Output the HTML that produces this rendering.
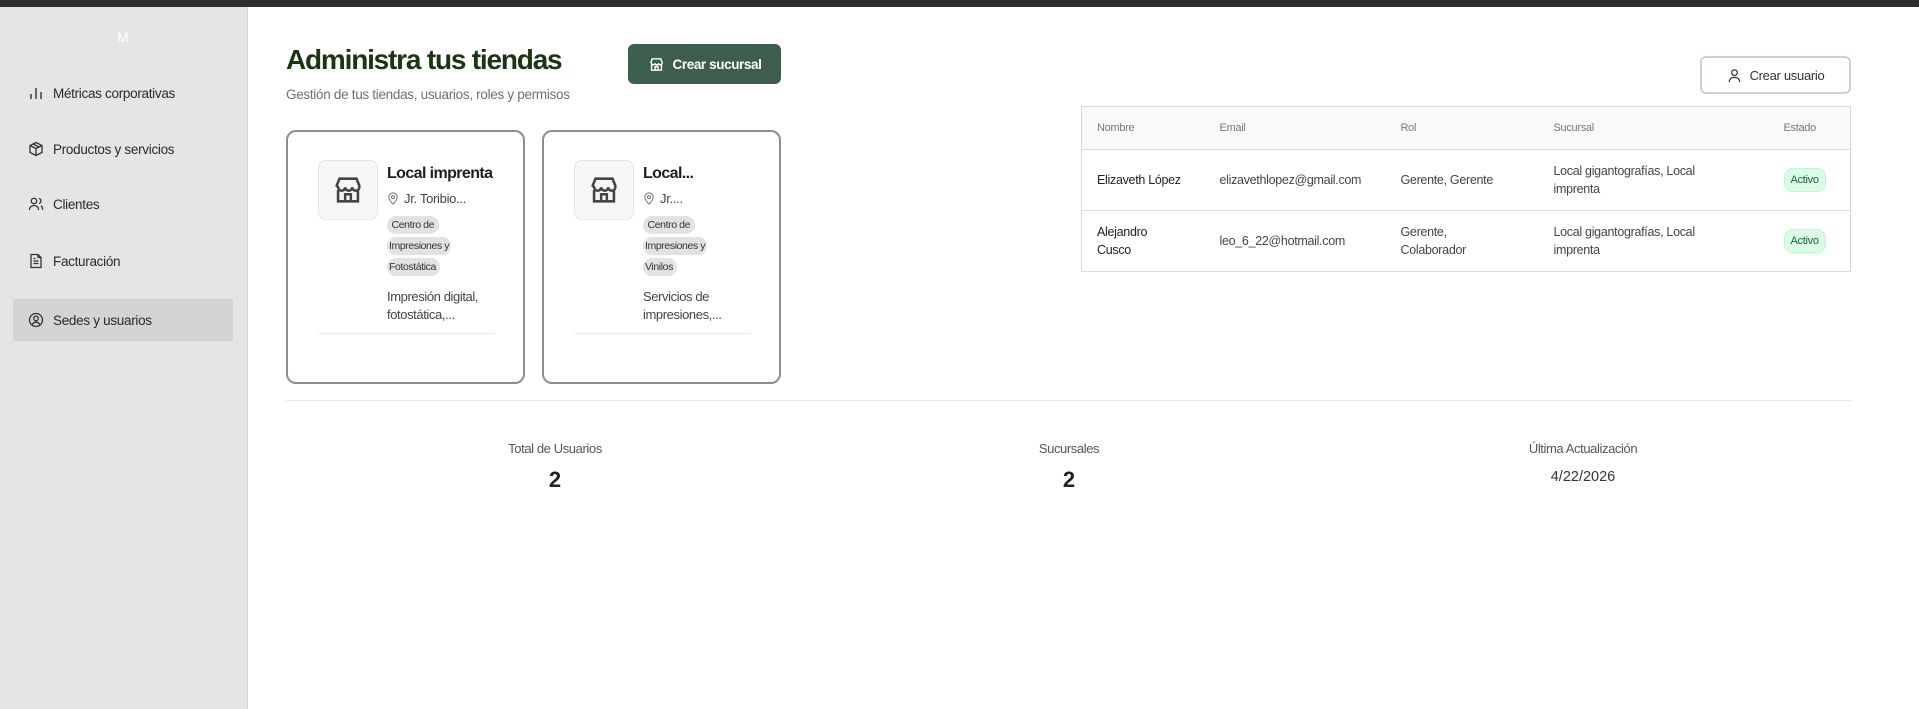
<!DOCTYPE html>
<html><head><meta charset="utf-8"><style>
*{box-sizing:border-box;margin:0;padding:0}
body{width:1919px;height:709px;overflow:hidden;background:#fff;font-family:"Liberation Sans",sans-serif;position:relative;color:#222}
.top{position:absolute;left:0;top:0;width:1919px;height:7px;background:#2e2e2e}
.side{position:absolute;left:0;top:7px;width:248px;height:702px;background:#e5e5e7;border-right:1px solid #d6d6d8}
.logo{position:absolute;left:117px;top:22px;color:#fff;font-size:14px}
.nav{position:absolute;left:13px;width:220px;height:42px;display:flex;align-items:center;padding-left:15px;font-size:13.5px;color:#2a2a2a;letter-spacing:-0.3px}
.nav svg{margin-right:9px}
.nav.act{background:#d4d4d6;border-radius:2px}
.abs{position:absolute}
h1{position:absolute;left:286px;top:44px;font-size:28px;color:#1b3412;letter-spacing:-1.2px;font-weight:bold}
.sub{left:286px;top:87px;font-size:13.5px;color:#707070;letter-spacing:-0.3px}
.btn1{left:628px;top:44px;width:153px;height:40px;background:#3d5e4a;border-radius:6px;color:#fff;font-size:13.5px;font-weight:bold;display:flex;align-items:center;justify-content:center;gap:8px;letter-spacing:-0.4px}
.card{position:absolute;top:130px;width:239px;height:254px;border:2px solid #8c8c98;border-radius:10px}
.ib{position:absolute;left:30px;top:28px;width:60px;height:60px;background:#f7f7f7;border:1px solid #e4e4e4;border-radius:8px;display:flex;align-items:center;justify-content:center}
.ct{position:absolute;left:99px;top:33px;font-size:16px;font-weight:bold;color:#1e1e1e;letter-spacing:-0.6px}
.loc{position:absolute;left:99px;top:59px;font-size:13px;color:#444;display:flex;align-items:center;gap:5px;letter-spacing:-0.3px}
.tag{position:absolute;left:99px;top:83px;font-size:10.5px;color:#333;line-height:21px;width:100px;letter-spacing:-0.4px}
.tag span{background:#e2e2e2;border-radius:10px;padding:3px 2px}
.desc{position:absolute;left:99px;top:156px;font-size:13px;color:#444;line-height:18px;letter-spacing:-0.4px}
.hr{position:absolute;left:30px;top:201px;width:177px;height:1px;background:#ececec}
.btn2{left:1700px;top:56px;width:151px;height:38px;border:2px solid #c8d0dc;border-radius:6px;font-size:13px;color:#333;display:flex;align-items:center;justify-content:center;gap:8px;letter-spacing:-0.3px}
table{position:absolute;left:1081px;top:106px;width:770px;border-collapse:collapse;border:1px solid #d8d8dc;font-size:12.5px;letter-spacing:-0.3px;table-layout:fixed}
th{height:43px;background:#f8f9fa;font-weight:normal;color:#777;font-size:11px;text-align:left;border-bottom:1px solid #d8d8dc}
td{height:61px;border-bottom:1px solid #dcdcdc;color:#444;line-height:18px}
td:first-child{color:#222}
.b{display:inline-block;background:#dcfce7;border:1px solid #bbf7d0;color:#166534;font-size:11px;padding:2px 6px;border-radius:9px}
.line{left:286px;top:400px;width:1565px;height:1px;background:#e6e6e6}
.st{position:absolute;top:441px;width:522px;text-align:center}
.st .l{font-size:13px;color:#555;letter-spacing:-0.4px}
.st .v{font-size:22px;font-weight:bold;color:#222;margin-top:11px}
.st .d{font-size:14.5px;color:#333;margin-top:13px}
</style></head><body>
<div class="top"></div>
<div class="side">
<div class="logo">M</div>
<div class="nav" style="top:65px"><svg width="16" height="16" viewBox="0 0 16 16" fill="none" stroke="#333" stroke-width="1.4"><path d="M3 14V9M8 14V3M13 14V7"/></svg>Métricas corporativas</div>
<div class="nav" style="top:121px"><svg width="16" height="16" viewBox="0 0 16 16" fill="none" stroke="#333" stroke-width="1.3"><path d="M8 1.5l6 3v7l-6 3-6-3v-7zM2 4.5l6 3 6-3M8 7.5v7M5 3l6 3"/></svg>Productos y servicios</div>
<div class="nav" style="top:176px"><svg width="16" height="16" viewBox="0 0 16 16" fill="none" stroke="#333" stroke-width="1.3"><circle cx="6" cy="5" r="2.7"/><path d="M1.5 14c0-3 2-4.5 4.5-4.5s4.5 1.5 4.5 4.5M11 2.5a2.6 2.6 0 010 5M13 9.8c1 .7 1.6 2 1.6 4"/></svg>Clientes</div>
<div class="nav" style="top:233px"><svg width="16" height="16" viewBox="0 0 16 16" fill="none" stroke="#333" stroke-width="1.3"><path d="M3 1.5h7l3 3v10H3zM10 1.5v3h3M5.5 8h5M5.5 10.5h5M5.5 5.5h2"/></svg>Facturación</div>
<div class="nav act" style="top:292px"><svg width="16" height="16" viewBox="0 0 16 16" fill="none" stroke="#333" stroke-width="1.3"><circle cx="8" cy="8" r="6.5"/><circle cx="8" cy="6.5" r="2.3"/><path d="M4 12.8c1-1.8 2.3-2.6 4-2.6s3 .8 4 2.6"/></svg>Sedes y usuarios</div>
</div>
<h1>Administra tus tiendas</h1>
<div class="abs sub">Gestión de tus tiendas, usuarios, roles y permisos</div>
<div class="abs btn1"><svg width="17" height="17" viewBox="0 0 24 24" fill="none" stroke="#fff" stroke-width="2"><path d="M4 9l2-5h12l2 5v1a2.5 2.5 0 01-5 0 2.5 2.5 0 01-5 0 2.5 2.5 0 01-5 0zM5 12v8h14v-8M10 20v-5h4v5"/></svg>Crear sucursal</div>

<div class="card" style="left:286px">
<div class="ib"><svg width="34" height="34" viewBox="0 0 24 24" fill="none" stroke="#444" stroke-width="1.8"><path d="M4 9l2-5h12l2 5v1a2.5 2.5 0 01-5 0 2.5 2.5 0 01-5 0 2.5 2.5 0 01-5 0zM5 12v8h14v-8M10 20v-5h4v5"/></svg></div>
<div class="ct">Local imprenta</div>
<div class="loc"><svg width="12" height="13" viewBox="0 0 12 14" fill="none" stroke="#777" stroke-width="1.1"><path d="M6 13s-4.5-4-4.5-7.5a4.5 4.5 0 019 0C10.5 9 6 13 6 13z"/><circle cx="6" cy="5.5" r="1.6"/></svg>Jr. Toribio...</div>
<div class="tag"><span>&nbsp;Centro de&nbsp;</span><br><span>Impresiones y</span><br><span>Fotostática&nbsp;</span></div>
<div class="desc">Impresión digital,<br>fotostática,...</div>
<div class="hr"></div>
</div>
<div class="card" style="left:542px">
<div class="ib"><svg width="34" height="34" viewBox="0 0 24 24" fill="none" stroke="#444" stroke-width="1.8"><path d="M4 9l2-5h12l2 5v1a2.5 2.5 0 01-5 0 2.5 2.5 0 01-5 0 2.5 2.5 0 01-5 0zM5 12v8h14v-8M10 20v-5h4v5"/></svg></div>
<div class="ct">Local...</div>
<div class="loc"><svg width="12" height="13" viewBox="0 0 12 14" fill="none" stroke="#777" stroke-width="1.1"><path d="M6 13s-4.5-4-4.5-7.5a4.5 4.5 0 019 0C10.5 9 6 13 6 13z"/><circle cx="6" cy="5.5" r="1.6"/></svg>Jr....</div>
<div class="tag"><span>&nbsp;Centro de&nbsp;</span><br><span>Impresiones y</span><br><span>Vinilos&nbsp;</span></div>
<div class="desc">Servicios de<br>impresiones,...</div>
<div class="hr"></div>
</div>

<div class="abs btn2"><svg width="15" height="15" viewBox="0 0 16 16" fill="none" stroke="#333" stroke-width="1.3"><circle cx="8" cy="5" r="3"/><path d="M2.5 15c0-3.5 2.5-5 5.5-5s5.5 1.5 5.5 5"/></svg>Crear usuario</div>
<table>
<tr><th style="padding-left:15px;width:138px">Nombre</th><th style="width:181px">Email</th><th style="width:153px">Rol</th><th style="width:230px">Sucursal</th><th>Estado</th></tr>
<tr><td style="padding-left:15px">Elizaveth López</td><td>elizavethlopez@gmail.com</td><td>Gerente, Gerente</td><td>Local gigantografías, Local<br>imprenta</td><td><span class="b">Activo</span></td></tr>
<tr><td style="padding-left:15px">Alejandro<br>Cusco</td><td>leo_6_22@hotmail.com</td><td>Gerente,<br>Colaborador</td><td>Local gigantografías, Local<br>imprenta</td><td><span class="b">Activo</span></td></tr>
</table>
<div class="abs line"></div>
<div class="st" style="left:294px"><div class="l">Total de Usuarios</div><div class="v">2</div></div>
<div class="st" style="left:808px"><div class="l">Sucursales</div><div class="v">2</div></div>
<div class="st" style="left:1322px"><div class="l">Última Actualización</div><div class="d">4/22/2026</div></div>
</body></html>
